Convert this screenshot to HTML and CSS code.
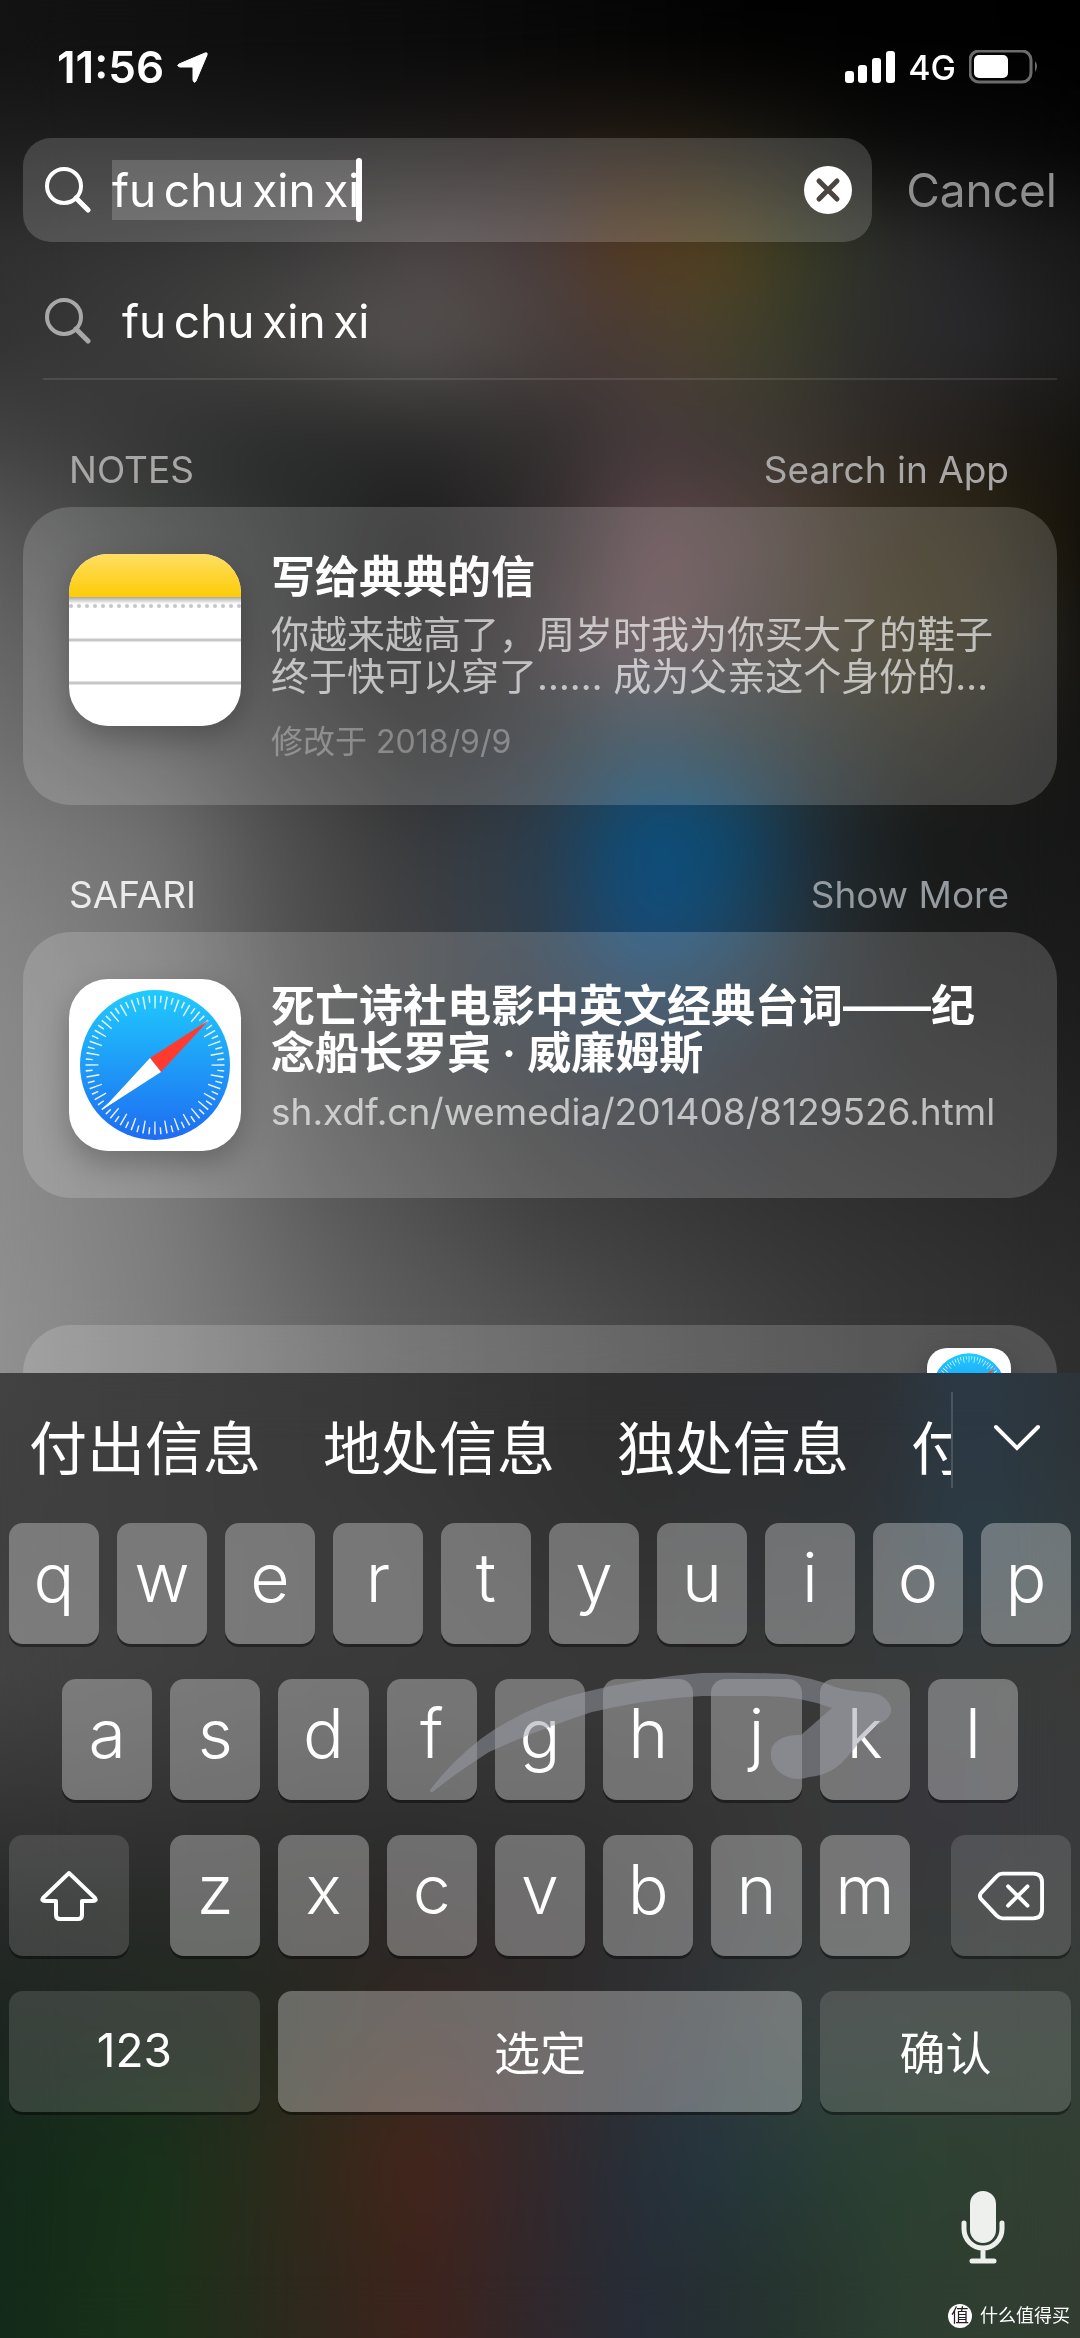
FILE: index.html
```html
<!DOCTYPE html>
<html lang="zh-CN">
<head>
    <meta charset="UTF-8">
    <meta name="viewport" content="width=device-width, initial-scale=1.0">
    <title>Search</title>
    <link rel="stylesheet" href="styles.css">
</head>
<body>
    <!-- Shared icons -->
    <svg class="sprite" width="0" height="0" aria-hidden="true">
        <defs>
            <linearGradient id="safariBlue" x1="0" y1="0" x2="0" y2="1">
                <stop offset="0" stop-color="#1fcbfd"/>
                <stop offset="1" stop-color="#1e6cf1"/>
            </linearGradient>
            <linearGradient id="notesYellow" x1="0" y1="0" x2="0" y2="1">
                <stop offset="0" stop-color="#fedf62"/>
                <stop offset="1" stop-color="#fecb05"/>
            </linearGradient>
            <linearGradient id="notesShade" x1="0" y1="0" x2="0" y2="1">
                <stop offset="0" stop-color="#a9a9a9"/>
                <stop offset="1" stop-color="#ffffff"/>
            </linearGradient>
        </defs>
        <symbol id="safari" viewBox="0 0 172 172">
            <rect width="172" height="172" fill="#fff"/>
            <circle cx="86" cy="86" r="75" fill="url(#safariBlue)"/>
            <circle cx="86" cy="86" r="63" fill="none" stroke="#fff" stroke-width="13" pathLength="360" stroke-dasharray="1.3 8.7" stroke-dashoffset="0.6" opacity="0.9"/>
            <circle cx="86" cy="86" r="66" fill="none" stroke="#fff" stroke-width="7" pathLength="360" stroke-dasharray="1.3 8.7" stroke-dashoffset="-4.4" opacity="0.9"/>
            <path d="M140 41 81 79 92 93Z" fill="#ff3b30"/>
            <path d="M33 131 81 79 92 93Z" fill="#fff"/>
        </symbol>
        <symbol id="search" viewBox="0 0 46 46">
            <circle cx="19" cy="19" r="17" fill="none" stroke="currentColor" stroke-width="4"/>
            <path d="M31 31 43 43" stroke="currentColor" stroke-width="5" stroke-linecap="round"/>
        </symbol>
    </svg>

    <main class="screen">
        <div class="wallpaper wallpaper-main">
            <i></i><i></i><i></i><i></i><i></i><i></i><i></i>
            <i></i><i></i><i></i><i></i><i></i><i></i><i></i>
        </div>

        <header class="status-bar">
            <div class="status-group">
                <span class="clock">11:56</span>
                <svg width="31" height="31" viewBox="0 0 31 31"><path d="M28 1Q31 0 30 3L19 29Q17 32 16 28V16Q16 15 15 15H3Q-1 14 2 12Z" fill="#fff" stroke="#fff" stroke-linejoin="round"/></svg>
            </div>
            <div class="status-group">
                <svg width="50" height="32" viewBox="0 0 50 32" fill="#fff">
                    <rect x="0" y="20" width="9" height="12" rx="3"/>
                    <rect x="13" y="14" width="9" height="18" rx="3"/>
                    <rect x="27" y="7" width="9" height="25" rx="3"/>
                    <rect x="41" y="0" width="9" height="32" rx="3"/>
                </svg>
                <span class="network">4G</span>
                <svg width="70" height="34" viewBox="0 0 70 34">
                    <rect x="1" y="1" width="61" height="31" rx="9" fill="none" stroke="#6c6c6c" stroke-width="3"/>
                    <rect x="5" y="5" width="34" height="23" rx="5" fill="#fff"/>
                    <path d="M66 11Q70 16 66 22Z" fill="#6c6c6c"/>
                </svg>
            </div>
        </header>

        <form class="search-bar">
            <div class="search-box">
                <label for="query" aria-label="Search"><svg width="46" height="46"><use href="#search"/></svg></label>
                <div class="query-wrap">
                    <input id="query" class="query" type="text" value="fu&#8198;chu&#8198;xin&#8198;xi">
                    <span class="caret"></span>
                </div>
                <button class="clear-btn" type="button" aria-label="Clear">
                    <svg width="48" height="48" viewBox="0 0 48 48"><circle cx="24" cy="24" r="24" fill="#fff"/><path d="M15 15 33 33M33 15 15 33" stroke="#4a4540" stroke-width="5" stroke-linecap="round"/></svg>
                </button>
            </div>
            <button class="cancel-btn" type="button">Cancel</button>
        </form>

        <a class="suggestion" href="#">
            <svg width="46" height="46"><use href="#search"/></svg>
            <span>fu&#8198;chu&#8198;xin&#8198;xi</span>
        </a>

        <section>
            <div class="section-head">
                <h2>NOTES</h2>
                <a href="#">Search in App</a>
            </div>
            <article class="card">
                <svg class="app-icon" viewBox="0 0 172 172">
                    <rect width="172" height="172" fill="#fff"/>
                    <rect width="172" height="43" fill="url(#notesYellow)"/>
                    <rect y="43" width="172" height="7" fill="url(#notesShade)"/>
                    <path d="M2 52H172" stroke="#c6c6ca" stroke-width="4" stroke-linecap="round" stroke-dasharray="0 8"/>
                    <path d="M0 86H172M0 129H172" stroke="#c6c6ca" stroke-width="3"/>
                </svg>
                <div class="card-body">
                    <h3>写给典典的信</h3>
                    <p class="excerpt">你越来越高了，周岁时我为你买大了的鞋子终于快可以穿了…… 成为父亲这个身份的…</p>
                    <p class="date">修改于 2018/9/9</p>
                </div>
            </article>
        </section>

        <section>
            <div class="section-head bright">
                <h2>SAFARI</h2>
                <a href="#">Show More</a>
            </div>
            <article class="card">
                <svg class="app-icon"><use href="#safari"/></svg>
                <div class="card-body card-link">
                    <h3>死亡诗社电影中英文经典台词——纪念船长罗宾 · 威廉姆斯</h3>
                    <p class="url">sh.xdf.cn/wemedia/201408/8129526.html</p>
                </div>
            </article>
        </section>

        <article class="card card-next">
            <svg class="app-icon small"><use href="#safari"/></svg>
        </article>
    </main>

    <section class="keyboard">
        <div class="wallpaper wallpaper-keys">
            <i></i><i></i><i></i><i></i><i></i><i></i><i></i><i></i>
        </div>

        <div class="candidates">
            <div class="candidate-list">
                <button type="button">付出信息</button>
                <button type="button">地处信息</button>
                <button type="button">独处信息</button>
                <button type="button">付</button>
            </div>
            <button class="expand-btn" type="button" aria-label="More candidates">
                <svg width="48" height="28" viewBox="0 0 48 28"><path d="M3 3 24 24 45 3" fill="none" stroke="#fff" stroke-width="4" stroke-linecap="round"/></svg>
            </button>
        </div>

        <div class="rows">
            <div class="row">
                <button class="key">q</button><button class="key">w</button><button class="key">e</button><button class="key">r</button><button class="key">t</button><button class="key">y</button><button class="key">u</button><button class="key">i</button><button class="key">o</button><button class="key">p</button>
            </div>
            <div class="row row-middle">
                <button class="key">a</button><button class="key">s</button><button class="key">d</button><button class="key">f</button><button class="key">g</button><button class="key">h</button><button class="key">j</button><button class="key">k</button><button class="key">l</button>
                <!-- Swipe trail from f up to k and back to j -->
                <svg class="trail" viewBox="0 0 1080 121">
                    <path d="M430 111Q452 82 482 59 530 25 585 13 640-1 702-6 745-7 785-5 815-1 835 8 848 12 864 13 885 13 891 28 893 40 875 47 862 60 848 77 833 96 809 98 792 104 778 92 768 82 772 68 780 55 801 56L832 29Q800 17 764 17L702 17Q647 20 592 33 537 51 489 73 452 97 434 112 430 115 430 111Z"/>
                </svg>
            </div>
            <div class="row">
                <button class="key key-dark key-edge" aria-label="Shift">
                    <svg width="58" height="52" viewBox="0 0 58 52"><path d="M29 3 3 28Q1 31 5 31H16V45Q16 49 20 49H38Q42 49 42 45V31H53Q57 31 55 28Z" fill="none" stroke="#fff" stroke-width="4" stroke-linejoin="round"/></svg>
                </button>
                <div class="row-letters">
                    <button class="key">z</button><button class="key">x</button><button class="key">c</button><button class="key">v</button><button class="key">b</button><button class="key">n</button><button class="key">m</button>
                </div>
                <button class="key key-dark key-edge" aria-label="Delete">
                    <svg width="66" height="50" viewBox="0 0 68 50" fill="none" stroke="#fff" stroke-width="4" stroke-linecap="round" stroke-linejoin="round"><path d="M25 2H57Q66 2 66 11V39Q66 48 57 48H25Q22 48 19 45L3 28Q1 25 3 22L19 5Q22 2 25 2Z"/><path d="M31 15 51 35M51 15 31 35"/></svg>
                </button>
            </div>
            <div class="row">
                <button class="key key-dark key-wide">123</button>
                <button class="key key-space">选定</button>
                <button class="key key-dark key-wide">确认</button>
            </div>
        </div>

        <footer class="dock">
            <button class="mic-btn" type="button" aria-label="Dictate">
                <svg width="44" height="73" viewBox="0 0 44 73"><rect x="9" y="0" width="26" height="52" rx="13" fill="#eef0ee"/><path d="M3 32V38A19 19 0 0 0 41 38V32M22 58V69M11 70H33" fill="none" stroke="#eef0ee" stroke-width="5" stroke-linecap="round"/></svg>
            </button>
            <p class="credit"><span class="credit-logo">值</span>什么值得买</p>
        </footer>
    </section>
</body>
</html>
```
FILE: styles.css
```css
/* Reset */
* {
    margin: 0;
    padding: 0;
    box-sizing: border-box;
}

body {
    font-family: Inter, 'Noto Sans CJK SC', sans-serif;
    background: #222;
    color: #fff;
    display: flex;
    flex-direction: column;
    height: 100vh;
    overflow: hidden;
}

button,
input {
    font: inherit;
    color: inherit;
    background: none;
    border: none;
}

a {
    color: inherit;
    text-decoration: none;
}

svg {
    display: block;
    flex: none;
}

.sprite {
    position: absolute;
}

/* Blurred wallpaper: colour bands, each one fading in over the band above */
.wallpaper {
    position: absolute;
    inset: 0;
    z-index: -1;
    display: grid;
    grid-auto-rows: minmax(0, 1fr);
    overflow: hidden;
}

.wallpaper i {
    height: 200%;
    transform: translateY(-25%);
    mask-image: linear-gradient(transparent, #000 50%);
}

.wallpaper i:first-child {
    mask-image: none;
}

.wallpaper::after {
    content: '';
    position: absolute;
    inset: 0;
    backdrop-filter: blur(30px);
}

.wallpaper-main i:nth-child(1) { background: linear-gradient(90deg, #131313, #0b0b0b 40%, #020202 70%, #000); }
.wallpaper-main i:nth-child(2) { background: linear-gradient(90deg, #1f1f1f, #1c1b1b 30%, #1f1a19 45%, #241b13 60%, #1a1812 70%, #0c0c0c 80%, #060606); }
.wallpaper-main i:nth-child(3) { background: linear-gradient(90deg, #303030, #353735 15%, #3b3b3b 25%, #4e4647 40%, #4b3e3e 50%, #573b22 58%, #52431f 67%, #353a26 75%, #2a2a2c 85%, #181818); }
.wallpaper-main i:nth-child(4) { background: linear-gradient(90deg, #333, #3c3c3c 15%, #565351 38%, #4c4543 48%, #483b39 55%, #4b4130 64%, #3d3e2b 71%, #2e2e2d 80%, #2a2a2d 90%, #1c1c1c); }
.wallpaper-main i:nth-child(5) { background: linear-gradient(90deg, #444, #343534 15%, #2a2b2b 25%, #2a2a2a 38%, #322f2f 50%, #453a3c 60%, #3d3833 72%, #2a2420 85%, #15130f); }
.wallpaper-main i:nth-child(6) { background: linear-gradient(90deg, #5a5a5a, #404341 12%, #333735 22%, #1c1c1c 38%, #302a2c 50%, #60464c 61%, #50403c 70%, #352c1a 82%, #2c2512 92%, #12100a); }
.wallpaper-main i:nth-child(7) { background: linear-gradient(90deg, #666, #565656 10%, #3a3a3a 22%, #1f1f1f 37%, #3a3335 50%, #624c51 60%, #453c3a 70%, #352f18 84%, #2a2720 95%, #131310); }
.wallpaper-main i:nth-child(8) { background: linear-gradient(90deg, #707070, #5e5e5e 12%, #404040 25%, #282828 40%, #303438 50%, #2c4450 60%, #2f3a3c 70%, #26241c 85%, #151515); }
.wallpaper-main i:nth-child(9) { background: linear-gradient(90deg, #7e7e7e, #707070 15%, #525252 25%, #3b3b3c 37%, #2c3c4a 50%, #084f80 60%, #0d4a72 67%, #1f2c33 76%, #181a1a 85%, #171717); }
.wallpaper-main i:nth-child(10) { background: linear-gradient(90deg, #868686, #747474 15%, #505050 27%, #404042 38%, #2f3e4d 50%, #144e7d 60%, #1c4868 67%, #262c30 77%, #1b1c1b 87%, #1a1a1a); }
.wallpaper-main i:nth-child(11) { background: linear-gradient(90deg, #8a8a8a, #7a7a7a 15%, #4c4c4c 30%, #353a3f 45%, #2a3a4c 60%, #2b3138 70%, #222 85%, #1e1e1e); }
.wallpaper-main i:nth-child(12) { background: linear-gradient(90deg, #8c8c8c, #7a7a7a 15%, #555 30%, #393939 50%, #313237 64%, #2a2a2a 80%, #242424); }
.wallpaper-main i:nth-child(13) { background: linear-gradient(90deg, #8e8e8e, #7d7d7d 15%, #5e5e5e 30%, #434343 50%, #363636 70%, #292929); }
.wallpaper-main i:nth-child(14) { background: linear-gradient(90deg, #919191, #7c7c7c 17%, #5f5f5f 35%, #474747 60%, #373737 80%, #2e2e2e); }

.wallpaper-keys i:nth-child(1) { background: linear-gradient(90deg, #424242, #3a3a3a 30%, #2f2f2f 58%, #2d3135 82%, #2c3a47 89%, #2d3438); }
.wallpaper-keys i:nth-child(2) { background: linear-gradient(90deg, #404040, #3b3b3b 35%, #323232 57%, #303436 80%, #2b3c47 89%, #303a3c); }
.wallpaper-keys i:nth-child(3) { background: linear-gradient(90deg, #444, #3b3b3b 30%, #383838 70%, #383a39 85%, #3b3b39); }
.wallpaper-keys i:nth-child(4) { background: linear-gradient(90deg, #373737, #313131 30%, #323232 55%, #383838 75%, #38383f 88%, #3a3b3d); }
.wallpaper-keys i:nth-child(5) { background: linear-gradient(90deg, #272928, #282a28 20%, #2c2828 40%, #2e2d2e 57%, #363738 72%, #3a3c3b); }
.wallpaper-keys i:nth-child(6) { background: linear-gradient(90deg, #1c2620, #20291f 20%, #33271f 38%, #302b2c 52%, #2e3439 65%, #363f3d 75%, #363f39); }
.wallpaper-keys i:nth-child(7) { background: linear-gradient(90deg, #15291b, #17321a 14%, #2b2c1b 25%, #46251b 39%, #37282a 48%, #2a2d35 56%, #253640 65%, #293d37 75%, #2c4232 84%, #334033); }
.wallpaper-keys i:nth-child(8) { background: linear-gradient(90deg, #13291a, #1a3219 14%, #2a2a1c 25%, #3e231c 39%, #33272a 48%, #262c37 59%, #25332f 71%, #2c3f30 84%, #333d31); }

/* Results screen */
.screen {
    position: relative;
    z-index: 0;
    flex: 1;
    min-height: 0;
    overflow: hidden;
    padding: 0 23px;
}

.status-bar {
    display: flex;
    justify-content: space-between;
    align-items: center;
    height: 138px;
    padding: 0 18px 4px 34px;
}

.status-group {
    display: flex;
    align-items: center;
    gap: 13px;
}

.clock {
    font-size: 44px;
    font-weight: 600;
}

.network {
    font-size: 34px;
    font-weight: 500;
}

/* Search field */
.search-bar {
    display: flex;
    gap: 34px;
}

.search-box {
    flex: 1;
    display: flex;
    align-items: center;
    height: 104px;
    padding: 0 20px 0 22px;
    border-radius: 28px;
    background: rgba(255, 255, 255, 0.17);
}

.query-wrap {
    flex: 1;
    display: flex;
    align-items: center;
    margin-left: 21px;
}

.query {
    field-sizing: content;
    height: 60px;
    font-size: 46px;
    background: rgba(255, 255, 255, 0.18);
    outline: none;
}

.caret {
    width: 6px;
    height: 64px;
    margin-left: -4px;
    border-radius: 3px;
    background: #fff;
}

.cancel-btn {
    font-size: 46px;
    color: #8e8e8e;
}

.suggestion {
    display: flex;
    align-items: center;
    gap: 31px;
    height: 138px;
    margin-left: 20px;
    padding: 22px 0 0 2px;
    border-bottom: 2px solid rgba(255, 255, 255, 0.1);
    font-size: 46px;
}

.suggestion svg {
    color: #a8a8a8;
}

/* Sections and cards */
.section-head {
    display: flex;
    justify-content: space-between;
    align-items: flex-end;
    height: 127px;
    padding: 0 48px 14px 46px;
    font-size: 37px;
    line-height: 46px;
    color: #a9a7a6;
}

.section-head h2 {
    font-size: 37px;
    font-weight: 400;
}

.section-head.bright h2 {
    color: #ebebeb;
}

.section-head.bright a {
    color: #949a9e;
}

.card {
    display: flex;
    gap: 30px;
    padding: 47px 46px;
    border-radius: 48px;
    background: rgba(255, 255, 255, 0.17);
}

.app-icon {
    width: 172px;
    height: 172px;
    border-radius: 39px;
    box-shadow: 0 12px 30px rgba(0, 0, 0, 0.25);
}

.card-body {
    flex: 1;
}

.card-link {
    padding-top: 4px;
}

.card h3 {
    padding-right: 20px;
    font-size: 44px;
    font-weight: 600;
    line-height: 47px;
}

.excerpt {
    margin-top: 12px;
    font-size: 38px;
    line-height: 42px;
    color: rgba(255, 255, 255, 0.65);
}

.date {
    margin-top: 29px;
    font-size: 32px;
    line-height: 32px;
    color: rgba(255, 255, 255, 0.32);
}

.url {
    margin-top: 12px;
    font-size: 37px;
    line-height: 46px;
    color: rgba(255, 255, 255, 0.65);
}

.card-next {
    justify-content: flex-end;
    margin-top: 127px;
    padding-top: 23px;
}

.app-icon.small {
    width: 84px;
    height: 84px;
    border-radius: 20px;
}

/* Keyboard */
.keyboard {
    position: relative;
    z-index: 0;
    flex: none;
}

.candidates {
    display: flex;
    align-items: center;
    height: 150px;
}

.candidate-list {
    flex: 1;
    min-width: 0;
    display: flex;
    align-items: center;
    gap: 62px;
    height: 96px;
    margin-top: -16px;
    padding-left: 29px;
    overflow: hidden;
    border-right: 2px solid rgba(255, 255, 255, 0.15);
}

.candidate-list button {
    flex: none;
    padding-top: 10px;
    font-size: 58px;
    white-space: nowrap;
}

.expand-btn {
    display: flex;
    justify-content: center;
    width: 127px;
    padding-bottom: 20px;
}

.rows {
    display: flex;
    flex-direction: column;
    gap: 35px;
}

.row {
    position: relative;
    display: flex;
    justify-content: space-between;
    gap: 18px;
    padding: 0 9px;
}

.row-middle {
    padding: 0 62px;
}

.row-letters {
    flex: 1;
    display: flex;
    gap: 18px;
    padding: 0 23px;
}

.key {
    flex: 1;
    display: flex;
    justify-content: center;
    align-items: center;
    min-width: 0;
    height: 121px;
    padding-bottom: 14px;
    border-radius: 14px;
    background: rgba(255, 255, 255, 0.31);
    box-shadow: 0 3px 0 rgba(0, 0, 0, 0.4);
    font-size: 68px;
    font-weight: 300;
}

.key-dark {
    padding-bottom: 0;
    background: rgba(255, 255, 255, 0.13);
}

.key-edge {
    flex: 0 0 120px;
}

.key-wide,
.key-space {
    flex: 251;
    padding-bottom: 4px;
    font-size: 46px;
    font-weight: 400;
}

.key-space {
    flex: 525;
}

.trail {
    position: absolute;
    left: 0;
    top: 0;
    width: 100%;
    overflow: visible;
    fill: rgba(156, 157, 168, 0.5);
    pointer-events: none;
}

/* Bottom strip */
.dock {
    display: flex;
    flex-direction: column;
    align-items: flex-end;
    padding: 79px 10px 7px 0;
}

.mic-btn {
    margin-right: 65px;
}

.credit {
    display: flex;
    align-items: center;
    gap: 8px;
    margin-top: 37px;
    font-size: 18px;
    line-height: 30px;
}

.credit-logo {
    width: 24px;
    height: 24px;
    border-radius: 50%;
    background: #fff;
    color: #222;
    font-size: 18px;
    line-height: 24px;
    text-align: center;
}
```
